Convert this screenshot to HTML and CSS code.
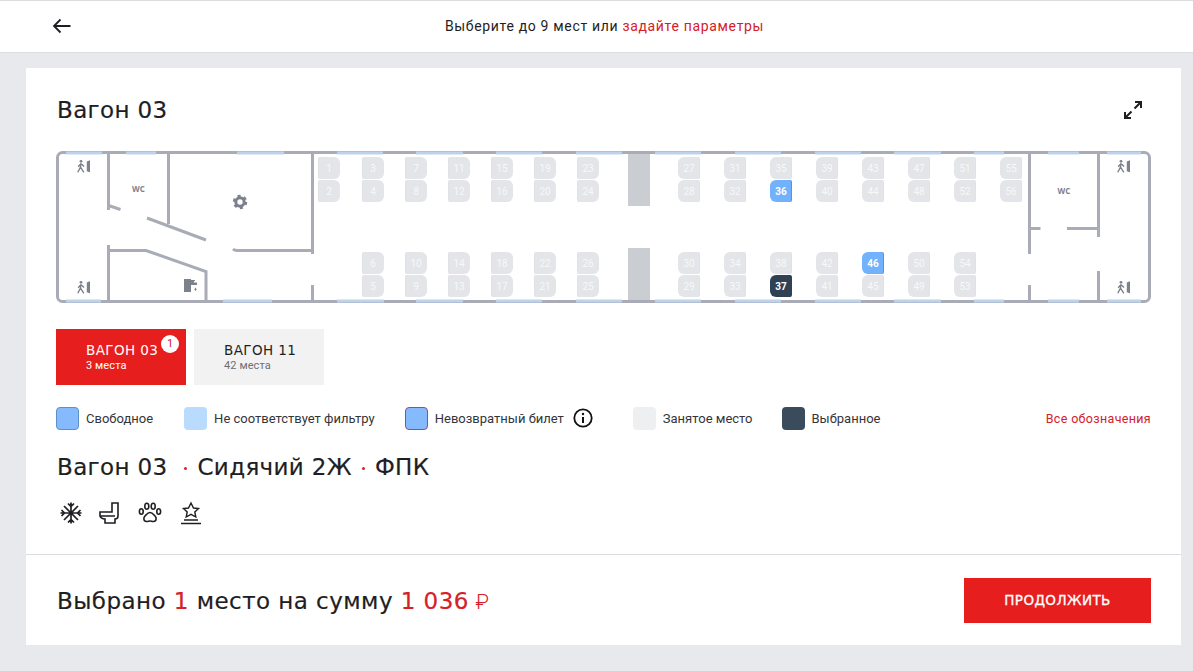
FILE: index.html
```html
<!DOCTYPE html>
<html lang="ru">
<head>
	<meta charset="UTF-8">
	<meta name="viewport" content="width=device-width, initial-scale=1.0">
	<title>Выбор мест</title>
	<link rel="stylesheet" href="styles.css">
</head>
<body>
	<header class="topbar">
		<a class="back" href="#" aria-label="Назад">
			<svg width="20" height="16" viewBox="0 0 20 16"><path d="M18.500 8H2M8.500 1.500 2 8l6.500 6.500" fill="none" stroke="#1e1e23" stroke-width="1.800"/></svg>
		</a>
		<p class="topbar-text">Выберите до 9 мест или <a href="#">задайте параметры</a></p>
	</header>

	<main class="card">
		<div class="card-body">
			<div class="title-row">
				<h1>Вагон 03</h1>
				<svg class="expand" width="20" height="20" viewBox="0 0 20 20"><path d="M12 2h6v6M18 2l-6.500 6.500M8 18H2v-6M2 18l6.500-6.500" fill="none" stroke="#1e1e23" stroke-width="2"/></svg>
			</div>

			<!-- схема вагона: координаты совпадают с координатами страницы -->
			<svg class="scheme" width="1095" height="153" viewBox="56 151 1095 153">
				<defs>
					<symbol id="seat-l" viewBox="0 0 22 22" width="22" height="22" overflow="visible">
						<path class="seat-back" d="M0 2a2 2 0 0 1 2-2h6v22H2a2 2 0 0 1-2-2z"/>
						<path class="seat-body" d="M1 2a2 2 0 0 1 2-2h13a6 6 0 0 1 6 6v10a6 6 0 0 1-6 6H3a2 2 0 0 1-2-2z"/>
					</symbol>
					<symbol id="seat-r" viewBox="0 0 22 22" width="22" height="22" overflow="visible">
						<path class="seat-back" d="M14 0h6a2 2 0 0 1 2 2v18a2 2 0 0 1-2 2h-6z"/>
						<path class="seat-body" d="M21 2a2 2 0 0 0-2-2H6a6 6 0 0 0-6 6v10a6 6 0 0 0 6 6h13a2 2 0 0 0 2-2z"/>
					</symbol>
					<g id="exit-man">
						<circle cx="4" cy="1.300" r="1.400" fill="#7d818c"/>
						<path d="M4 3 3.500 7 .8 12.300M3.500 7l3.300 5.300M4 3.500 1.200 6.800M4 3.500 7 6.500" fill="none" stroke="#7d818c" stroke-width="1.400"/>
						<path d="M9.800 1.500 13 .3v12l-3.200-1z" fill="#7d818c"/>
					</g>
				</defs>

				<rect class="wall" x="57.500" y="152.500" width="1092" height="149" rx="5"/>
				<g class="windows">
					<path d="M66 153h36M126 153h30M237 153h47M337 153h46M416 153h47M496 153h46M576 153h46M655 153h46M735 153h46M815 153h46M894 153h47M974 153h30M1048 153h31M1107 153h34"/>
					<path d="M66 301h35M223 301h49M337 301h47M416 301h47M496 301h46M576 301h46M655 301h46M735 301h46M815 301h46M894 301h47M974 301h30M1048 301h31M1107 301h34"/>
				</g>

				<path class="wall" d="M108.500 152v58M108.500 205.500l12 4M168.500 152v72M147 218l59 22M233 249c1 1 2 1.500 4 1.500h75M312.500 152v102M312.500 285v17M108.500 245v57M108.500 250.500H146l60 21V302M1029.500 152v102M1029.500 285v17M1029.500 228.500h11M1098.500 152v85M1098.500 271v31M1067 228.500h31"/>

				<rect class="pillar" x="628" y="154" width="22" height="52"/>
				<rect class="pillar" x="628" y="248" width="22" height="52"/>

				<use href="#exit-man" x="77" y="160"/>
				<use href="#exit-man" x="77" y="281"/>
				<use href="#exit-man" x="1117" y="160"/>
				<use href="#exit-man" x="1117" y="281"/>

				<text class="wc" x="138.500" y="192">WC</text>
				<text class="wc" x="1064" y="194">WC</text>

				<g class="gear">
					<circle cx="240" cy="202" r="4.200"/>
					<circle class="gear-teeth" cx="240" cy="202" r="6"/>
				</g>
				<path class="tap" d="M184 279h7v13h-7zM191 280h4v1h-1v1.500h3v2.500h-6zM195.500 287.500l1.200 2-1.200 1.500-1.200-1.500z"/>

				<!-- места, левая половина -->
				<g class="seat" transform="translate(318 157)"><use href="#seat-l"/><text x="11" y="14.500">1</text></g>
				<g class="seat" transform="translate(318 180)"><use href="#seat-l"/><text x="11" y="14.500">2</text></g>
				<g class="seat" transform="translate(362 157)"><use href="#seat-l"/><text x="11" y="14.500">3</text></g>
				<g class="seat" transform="translate(362 180)"><use href="#seat-l"/><text x="11" y="14.500">4</text></g>
				<g class="seat" transform="translate(405 157)"><use href="#seat-l"/><text x="11" y="14.500">7</text></g>
				<g class="seat" transform="translate(405 180)"><use href="#seat-l"/><text x="11" y="14.500">8</text></g>
				<g class="seat" transform="translate(448 157)"><use href="#seat-l"/><text x="11" y="14.500">11</text></g>
				<g class="seat" transform="translate(448 180)"><use href="#seat-l"/><text x="11" y="14.500">12</text></g>
				<g class="seat" transform="translate(491 157)"><use href="#seat-l"/><text x="11" y="14.500">15</text></g>
				<g class="seat" transform="translate(491 180)"><use href="#seat-l"/><text x="11" y="14.500">16</text></g>
				<g class="seat" transform="translate(534 157)"><use href="#seat-l"/><text x="11" y="14.500">19</text></g>
				<g class="seat" transform="translate(534 180)"><use href="#seat-l"/><text x="11" y="14.500">20</text></g>
				<g class="seat" transform="translate(577 157)"><use href="#seat-l"/><text x="11" y="14.500">23</text></g>
				<g class="seat" transform="translate(577 180)"><use href="#seat-l"/><text x="11" y="14.500">24</text></g>

				<g class="seat" transform="translate(362 252)"><use href="#seat-l"/><text x="11" y="14.500">6</text></g>
				<g class="seat" transform="translate(362 275)"><use href="#seat-l"/><text x="11" y="14.500">5</text></g>
				<g class="seat" transform="translate(405 252)"><use href="#seat-l"/><text x="11" y="14.500">10</text></g>
				<g class="seat" transform="translate(405 275)"><use href="#seat-l"/><text x="11" y="14.500">9</text></g>
				<g class="seat" transform="translate(448 252)"><use href="#seat-l"/><text x="11" y="14.500">14</text></g>
				<g class="seat" transform="translate(448 275)"><use href="#seat-l"/><text x="11" y="14.500">13</text></g>
				<g class="seat" transform="translate(491 252)"><use href="#seat-l"/><text x="11" y="14.500">18</text></g>
				<g class="seat" transform="translate(491 275)"><use href="#seat-l"/><text x="11" y="14.500">17</text></g>
				<g class="seat" transform="translate(534 252)"><use href="#seat-l"/><text x="11" y="14.500">22</text></g>
				<g class="seat" transform="translate(534 275)"><use href="#seat-l"/><text x="11" y="14.500">21</text></g>
				<g class="seat" transform="translate(577 252)"><use href="#seat-l"/><text x="11" y="14.500">26</text></g>
				<g class="seat" transform="translate(577 275)"><use href="#seat-l"/><text x="11" y="14.500">25</text></g>

				<!-- места, правая половина -->
				<g class="seat" transform="translate(678 157)"><use href="#seat-r"/><text x="11" y="14.500">27</text></g>
				<g class="seat" transform="translate(678 180)"><use href="#seat-r"/><text x="11" y="14.500">28</text></g>
				<g class="seat" transform="translate(724 157)"><use href="#seat-r"/><text x="11" y="14.500">31</text></g>
				<g class="seat" transform="translate(724 180)"><use href="#seat-r"/><text x="11" y="14.500">32</text></g>
				<g class="seat" transform="translate(770 157)"><use href="#seat-r"/><text x="11" y="14.500">35</text></g>
				<g class="seat seat-free" transform="translate(770 180)"><use href="#seat-r"/><text x="11" y="14.500">36</text></g>
				<g class="seat" transform="translate(816 157)"><use href="#seat-r"/><text x="11" y="14.500">39</text></g>
				<g class="seat" transform="translate(816 180)"><use href="#seat-r"/><text x="11" y="14.500">40</text></g>
				<g class="seat" transform="translate(862 157)"><use href="#seat-r"/><text x="11" y="14.500">43</text></g>
				<g class="seat" transform="translate(862 180)"><use href="#seat-r"/><text x="11" y="14.500">44</text></g>
				<g class="seat" transform="translate(908 157)"><use href="#seat-r"/><text x="11" y="14.500">47</text></g>
				<g class="seat" transform="translate(908 180)"><use href="#seat-r"/><text x="11" y="14.500">48</text></g>
				<g class="seat" transform="translate(954 157)"><use href="#seat-r"/><text x="11" y="14.500">51</text></g>
				<g class="seat" transform="translate(954 180)"><use href="#seat-r"/><text x="11" y="14.500">52</text></g>
				<g class="seat" transform="translate(1000 157)"><use href="#seat-r"/><text x="11" y="14.500">55</text></g>
				<g class="seat" transform="translate(1000 180)"><use href="#seat-r"/><text x="11" y="14.500">56</text></g>

				<g class="seat" transform="translate(678 252)"><use href="#seat-r"/><text x="11" y="14.500">30</text></g>
				<g class="seat" transform="translate(678 275)"><use href="#seat-r"/><text x="11" y="14.500">29</text></g>
				<g class="seat" transform="translate(724 252)"><use href="#seat-r"/><text x="11" y="14.500">34</text></g>
				<g class="seat" transform="translate(724 275)"><use href="#seat-r"/><text x="11" y="14.500">33</text></g>
				<g class="seat" transform="translate(770 252)"><use href="#seat-r"/><text x="11" y="14.500">38</text></g>
				<g class="seat seat-selected" transform="translate(770 275)"><use href="#seat-r"/><text x="11" y="14.500">37</text></g>
				<g class="seat" transform="translate(816 252)"><use href="#seat-r"/><text x="11" y="14.500">42</text></g>
				<g class="seat" transform="translate(816 275)"><use href="#seat-r"/><text x="11" y="14.500">41</text></g>
				<g class="seat seat-free" transform="translate(862 252)"><use href="#seat-r"/><text x="11" y="14.500">46</text></g>
				<g class="seat" transform="translate(862 275)"><use href="#seat-r"/><text x="11" y="14.500">45</text></g>
				<g class="seat" transform="translate(908 252)"><use href="#seat-r"/><text x="11" y="14.500">50</text></g>
				<g class="seat" transform="translate(908 275)"><use href="#seat-r"/><text x="11" y="14.500">49</text></g>
				<g class="seat" transform="translate(954 252)"><use href="#seat-r"/><text x="11" y="14.500">54</text></g>
				<g class="seat" transform="translate(954 275)"><use href="#seat-r"/><text x="11" y="14.500">53</text></g>
			</svg>

			<div class="tabs">
				<a class="tab tab-active" href="#">
					<span class="tab-name">ВАГОН 03</span>
					<span class="tab-seats">3 места</span>
					<span class="tab-badge">1</span>
				</a>
				<a class="tab" href="#">
					<span class="tab-name">ВАГОН 11</span>
					<span class="tab-seats">42 места</span>
				</a>
			</div>

			<div class="legend">
				<div class="legend-item legend-first"><span class="swatch swatch-free"></span>Свободное</div>
				<div class="legend-item"><span class="swatch swatch-filter"></span>Не соответствует фильтру</div>
				<div class="legend-item">
					<span class="swatch swatch-nonref"></span>Невозвратный билет
					<svg class="info" width="20" height="20" viewBox="0 0 20 20"><circle cx="10" cy="10" r="8.700" fill="none" stroke="#111" stroke-width="1.800"/><circle cx="10" cy="6" r="1.200" fill="#111"/><path d="M10 9v6" stroke="#111" stroke-width="2"/></svg>
				</div>
				<div class="legend-item legend-busy"><span class="swatch swatch-busy"></span>Занятое место</div>
				<div class="legend-item legend-selected"><span class="swatch swatch-selected"></span>Выбранное</div>
				<a class="legend-link" href="#">Все обозначения</a>
			</div>

			<h2 class="subtitle">
				<span>Вагон 03</span><i class="dot dot-first"></i><span>Сидячий 2Ж</span><i class="dot"></i><span>ФПК</span>
			</h2>

			<div class="features">
				<svg width="24" height="24" viewBox="0 0 24 24"><path d="M12 1.500v21M1.500 12h21M5 5l14 14M19 5 5 19M9 2.500l3 3 3-3M9 21.500l3-3 3 3M2.500 9l3 3-3 3M21.500 9l-3 3 3 3" fill="none" stroke="#1e1e23" stroke-width="1.700"/></svg>
				<svg class="feature-wc" width="24" height="24" viewBox="0 0 24 24"><path d="M15 11V2h6v13c0 1.500-1 3-3 3v4H8v-4c-3 0-5-2-5-3v-4zM3 15h15" fill="none" stroke="#1e1e23" stroke-width="1.600"/></svg>
				<svg width="24" height="24" viewBox="0 0 24 24"><g fill="none" stroke="#1e1e23" stroke-width="1.600"><ellipse cx="3.300" cy="10.500" rx="1.900" ry="2.700"/><ellipse cx="8.800" cy="5.200" rx="2" ry="3"/><ellipse cx="15.200" cy="5.200" rx="2" ry="3"/><ellipse cx="20.700" cy="10.500" rx="1.900" ry="2.700"/><path d="M12 11.500c-2.500 0-3.500 2-5 3.500-1.700 1.700-1.700 5.500 1.500 5.500 1.500 0 2.300-.5 3.500-.5s2 .5 3.500.5c3.200 0 3.200-3.800 1.500-5.500-1.500-1.500-2.500-3.500-5-3.500z"/></g></svg>
				<svg width="24" height="24" viewBox="0 0 24 24"><path d="m12 2 2.500 5 5 .6-3.700 3.400 1 5-4.800-2.600L7.200 16l1-5-3.700-3.400 5-.6zM5 19h14" fill="none" stroke="#1e1e23" stroke-width="1.400"/><path d="M2 22.500h20" stroke="#1e1e23" stroke-width="1.500"/></svg>
			</div>
		</div>

		<footer class="summary">
			<p class="summary-text">Выбрано <b>1</b> место на сумму <b>1 036 <span class="rub">₽</span></b></p>
			<a class="btn" href="#">ПРОДОЛЖИТЬ</a>
		</footer>
	</main>
</body>
</html>
```

FILE: styles.css
```css
*,
*::before,
*::after {
	box-sizing: border-box;
	margin: 0;
	padding: 0;
}

a {
	color: inherit;
	text-decoration: none;
}

h1,
h2 {
	font-weight: 400;
}

html,
body {
	height: 100%;
}

body {
	font-family: Roboto, Arial, sans-serif;
	font-size: 13px;
	color: #1e1e23;
	background-color: #e8e9ed;
	overflow: hidden;
}

.topbar {
	position: relative;
	height: 53px;
	display: flex;
	align-items: center;
	justify-content: center;
	padding: 0 0 2px 16px;
	background-color: #fff;
	border-top: 1px solid #dcdde0;
	border-bottom: 1px solid #dcdde0;
}

.back {
	position: absolute;
	left: 52px;
	top: 17px;
	line-height: 0;
}

.topbar-text {
	font-size: 14px;
	letter-spacing: 0.67px;
}

.topbar-text a {
	color: #d5202a;
}

.card {
	margin: 15px 12px 0 26px;
	height: 577px;
	display: flex;
	flex-direction: column;
	background-color: #fff;
}

.card-body {
	flex: 1;
	padding: 0 30px;
}

.title-row {
	height: 83px;
	display: flex;
	align-items: center;
	justify-content: space-between;
}

h1 {
	font-family: "DejaVu Sans", sans-serif;
	font-size: 23px;
	letter-spacing: 0.35px;
	padding-left: 1px;
	-webkit-text-stroke: 0.2px #1e1e23;
}

.expand {
	margin-right: 8px;
}

.scheme {
	display: block;
}

.wall {
	fill: none;
	stroke: #a9acb7;
	stroke-width: 3;
}

.windows path {
	fill: none;
	stroke: #bdd3ec;
	stroke-width: 3;
}

.pillar {
	fill: #cacdd2;
}

.wc {
	font-family: "Open Sans", sans-serif;
	font-size: 8px;
	font-weight: 700;
	fill: #7d818c;
	text-anchor: middle;
}

.gear circle {
	fill: none;
	stroke: #7d818c;
	stroke-width: 3;
}

.gear .gear-teeth {
	stroke-width: 2.500;
	stroke-dasharray: 3 3.280;
}

.tap {
	fill: #7d818c;
}

.seat {
	--back: #dfe1e4;
	--body: #e3e5e8;
}

.seat-free {
	--back: #4f93ea;
	--body: #72b1fb;
}

.seat-selected {
	--back: #2f4254;
	--body: #2f4254;
}

.seat-back {
	fill: var(--back);
}

.seat-body {
	fill: var(--body);
}

.seat text {
	font-size: 10px;
	fill: #f7f8f9;
	text-anchor: middle;
}

.seat-free text,
.seat-selected text {
	font-weight: 700;
	fill: #fff;
}

.tabs {
	display: flex;
	gap: 8px;
	margin-top: 25px;
}

.tab {
	position: relative;
	width: 130px;
	height: 56px;
	padding: 13px 0 0 30px;
	display: flex;
	flex-direction: column;
	background-color: #f2f2f2;
}

.tab-name {
	font-family: "DejaVu Sans", sans-serif;
	font-size: 13.500px;
	line-height: 16px;
	letter-spacing: 0.4px;
}

.tab-seats {
	font-size: 11px;
	line-height: 14px;
	margin-top: 1px;
	letter-spacing: 0.1px;
	color: #6d6f75;
}

.tab-active {
	background-color: #e61e1e;
	color: #fff;
}

.tab-active .tab-seats {
	color: #fff;
}

.tab-badge {
	position: absolute;
	top: 6px;
	right: 7px;
	width: 18px;
	height: 18px;
	border-radius: 50%;
	background-color: #fff;
	color: #d5202a;
	font-size: 11px;
	line-height: 18px;
	text-align: center;
}

.legend {
	display: flex;
	align-items: center;
	gap: 30px;
	margin-top: 21px;
	height: 24px;
	color: #33353a;
}

.legend-item {
	display: flex;
	align-items: center;
	gap: 7px;
}

.legend-first {
	padding-right: 1px;
}

.legend-busy {
	margin-left: 10px;
}

.legend-selected {
	margin-left: -1px;
}

.swatch {
	width: 23px;
	height: 23px;
	border-radius: 4px;
}

.swatch-free {
	background-color: #85bbfd;
	border: 1px solid #5d8fc9;
}

.swatch-filter {
	background-color: #b9dbfd;
}

.swatch-nonref {
	background-color: #85bbfd;
	border: 1px solid #a3487c;
}

.swatch-busy {
	background-color: #edeff1;
}

.swatch-selected {
	background-color: #3a4b5c;
}

.info {
	margin-left: 2px;
}

.legend-link {
	margin-left: auto;
	color: #d5202a;
	font-size: 12.500px;
	letter-spacing: 0.33px;
}

.subtitle {
	display: flex;
	align-items: center;
	margin-top: 24px;
	padding-left: 1px;
	font-family: "DejaVu Sans", sans-serif;
	font-size: 23px;
	line-height: 26px;
	letter-spacing: 0.35px;
	-webkit-text-stroke: 0.2px #1e1e23;
}

.dot {
	width: 3px;
	height: 3px;
	margin: 2px 10px 0;
	border-radius: 50%;
	background-color: #d5202a;
}

.dot-first {
	margin-left: 17px;
}

.features {
	display: flex;
	gap: 17px;
	margin-top: 21px;
	padding-left: 3px;
}

.feature-wc {
	margin-left: -3px;
}

.summary {
	height: 91px;
	padding: 2px 30px 0;
	display: flex;
	align-items: center;
	justify-content: space-between;
	border-top: 1px solid #dcdde0;
}

.summary-text {
	font-family: "DejaVu Sans", sans-serif;
	font-size: 23px;
	letter-spacing: 0.45px;
	padding-left: 1px;
	-webkit-text-stroke: 0.2px #1e1e23;
}

.summary-text b {
	font-weight: 400;
	color: #d5202a;
	-webkit-text-stroke: 0.2px #d5202a;
}

.rub {
	margin-left: -1px;
	font-family: Roboto, sans-serif;
	font-size: 21px;
	font-weight: 300;
	-webkit-text-stroke: 0;
}

.btn {
	width: 187px;
	height: 45px;
	margin-top: -2px;
	display: flex;
	align-items: center;
	justify-content: center;
	background-color: #e61e1e;
	color: #fff;
	font-family: "DejaVu Sans", sans-serif;
	font-size: 13.500px;
	letter-spacing: 0.4px;
	-webkit-text-stroke: 0.3px #fff;
}
```
